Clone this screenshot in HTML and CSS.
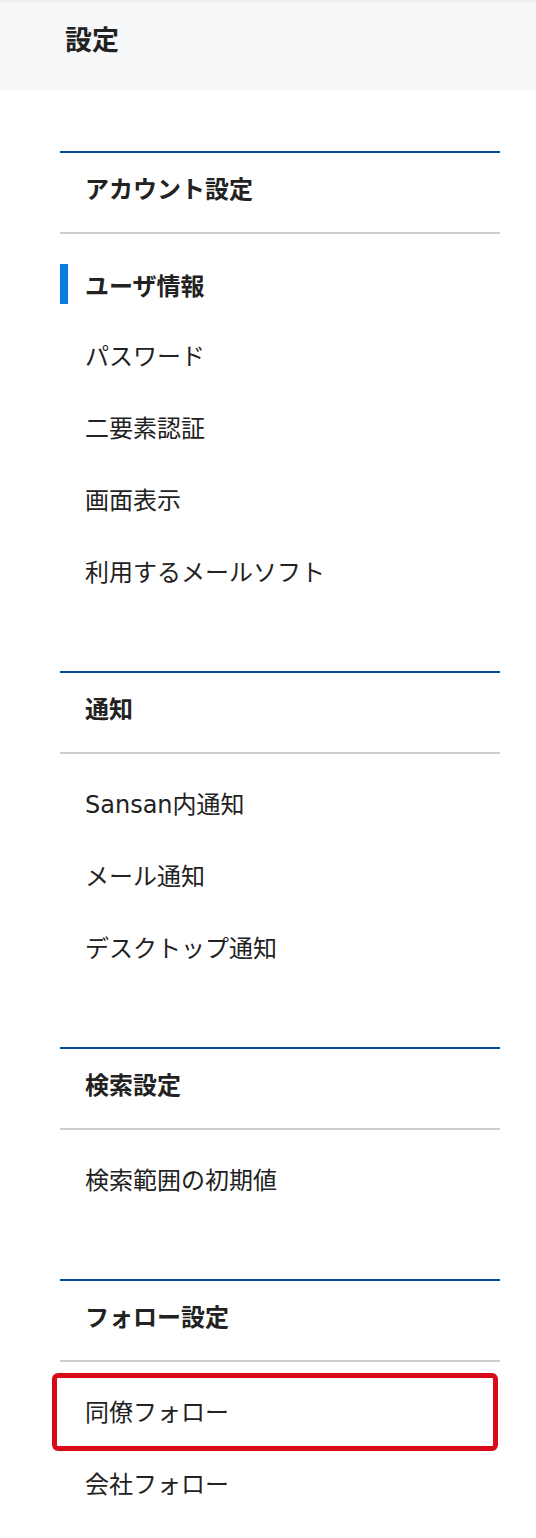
FILE: index.html
```html
<!DOCTYPE html>
<html lang="ja">
<head>
<meta charset="utf-8">
<title>設定</title>
<link rel="stylesheet" href="styles.css">
</head>
<body>
<header class="page-header">
  <h1 class="page-title">設定</h1>
</header>
<main class="content">
  <section class="group">
    <h2 class="group-title">アカウント設定</h2>
    <ul class="menu">
      <li class="menu-item active">ユーザ情報</li>
      <li class="menu-item">パスワード</li>
      <li class="menu-item">二要素認証</li>
      <li class="menu-item">画面表示</li>
      <li class="menu-item">利用するメールソフト</li>
    </ul>
  </section>
  <section class="group">
    <h2 class="group-title">通知</h2>
    <ul class="menu">
      <li class="menu-item">Sansan内通知</li>
      <li class="menu-item">メール通知</li>
      <li class="menu-item">デスクトップ通知</li>
    </ul>
  </section>
  <section class="group">
    <h2 class="group-title">検索設定</h2>
    <ul class="menu">
      <li class="menu-item">検索範囲の初期値</li>
    </ul>
  </section>
  <section class="group">
    <h2 class="group-title">フォロー設定</h2>
    <ul class="menu">
      <li class="menu-item highlighted">同僚フォロー</li>
      <li class="menu-item">会社フォロー</li>
    </ul>
  </section>
</main>
</body>
</html>
```

FILE: styles.css
```css
* { box-sizing: border-box; }
html, body {
  margin: 0;
  padding: 0;
  background: #ffffff;
}
body {
  font-family: "DejaVu Sans", "Noto Sans CJK JP", sans-serif;
  color: #222222;
}
.page-header {
  height: 90px;
  background: #f7f8fa;
  box-shadow: inset 0 4px 4px -2px rgba(0,0,0,0.06);
  padding: 0 0 0 65px;
  display: flex;
  align-items: flex-start;
}
.page-title {
  margin: 22px 0 0;
  font-family: "Noto Sans CJK JP", sans-serif;
  font-size: 27px;
  font-weight: 700;
  line-height: 34px;
}
.content {
  padding: 61px 36px 0 60px;
  display: flex;
  flex-direction: column;
  gap: 63px;
}
.group {
  border-top: 2px solid #024d98;
}
.group-title {
  margin: 0;
  padding: 19px 0 21px 25px;
  height: 81px;
  border-bottom: 2px solid #cccccc;
  font-family: "Noto Sans CJK JP", sans-serif;
  font-size: 24px;
  font-weight: 700;
  line-height: 32px;
}
.menu {
  list-style: none;
  margin: 0;
  padding: 14px 0 0;
}
.menu-item {
  position: relative;
  height: 72px;
  padding-left: 25px;
  padding-top: 2px;
  display: flex;
  align-items: center;
  font-size: 24px;
  line-height: 32px;
}
.menu-item.active {
  font-weight: 700;
  font-family: "Noto Sans CJK JP", sans-serif;
}
.menu-item.active::before {
  content: "";
  position: absolute;
  left: 0;
  top: 16px;
  width: 8px;
  height: 40px;
  background: #0a7be0;
}
.menu-item.highlighted::after {
  content: "";
  position: absolute;
  left: -8px;
  right: 2px;
  top: -3px;
  bottom: -3px;
  border: 5px solid #d90b1a;
  border-radius: 6px;
}
```
